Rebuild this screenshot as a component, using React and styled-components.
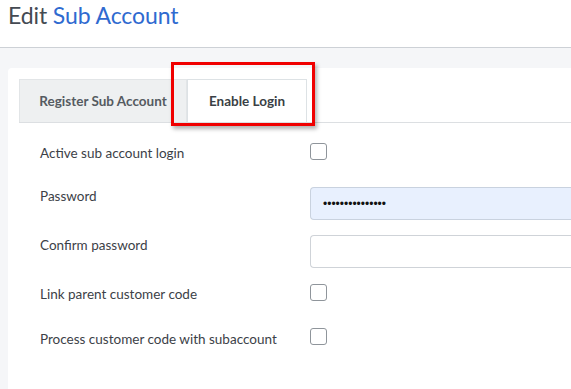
import React from "react";
import styled, { createGlobalStyle } from "styled-components";

const Global = createGlobalStyle`
  html, body { margin: 0; padding: 0; background: #f5f6f8; }
  body { font-family: Lato, "Noto Sans", sans-serif; overflow: hidden; }
`;

const Page = styled.div`
  width: 571px;
  height: 389px;
  overflow: hidden;
  background: #f5f6f8;
`;

const Header = styled.header`
  height: 48px;
  background: #fff;
  border-bottom: 1px solid #cdd1d6;
  box-sizing: border-box;
  padding: 0 0 0 8px;
`;

const Title = styled.h1`
  margin: 0;
  font-weight: 400;
  font-size: 23px;
  line-height: 30px;
  color: #444a52;
  letter-spacing: -0.1px;
`;

const Accent = styled.span`
  color: #2f6ad0;
`;

const Body = styled.main`
  padding: 20px 0 0 8px;
`;

const Card = styled.section`
  background: #fff;
  border-radius: 4px 0 0 0;
  height: 340px;
  padding: 11px 0 0 11px;
  box-sizing: border-box;
`;

const TabBar = styled.div`
  display: flex;
  border-bottom: 1px solid #dcdfe2;
  height: 44px;
  box-sizing: border-box;
  position: relative;
`;

const Tab = styled.div`
  display: flex;
  align-items: center;
  justify-content: center;
  width: ${(p) => p.$w}px;
  height: 43px;
  box-sizing: border-box;
  font-size: 13.5px;
  font-weight: 700;
  color: ${(p) => (p.$active ? "#3a3f45" : "#555b61")};
  background: ${(p) => (p.$active ? "#fff" : "#eef0f1")};
  border: 1px solid ${(p) => (p.$active ? "#dde2e5" : "#e2e5e7")};
  border-bottom: none;
`;

const Highlight = styled.div`
  position: absolute;
  left: 152px;
  top: -17px;
  width: 144px;
  height: 64px;
  box-sizing: border-box;
  border: 3px solid #f00000;
  box-shadow: 2px 3px 4px rgba(0, 0, 0, 0.3);
  pointer-events: none;
`;

const Form = styled.div`
  display: flex;
  flex-direction: column;
  padding: 0 0 0 21px;
`;

const Row = styled.div`
  display: grid;
  grid-template-columns: 270px 1fr;
  align-items: start;
  padding-top: ${(p) => p.$pt}px;
`;

const Label = styled.label`
  font-size: 13.5px;
  line-height: 18px;
  margin-top: ${(p) => p.$mt ?? 1}px;
  color: #3c4147;
`;

const Check = styled.span`
  display: block;
  width: 17px;
  height: 17px;
  box-sizing: border-box;
  border: 1px solid #8f959b;
  border-radius: 3px;
  background: #fff;
`;

const Input = styled.div`
  height: 33px;
  box-sizing: border-box;
  border: 1px solid ${(p) => (p.$filled ? "#c9d2df" : "#cfd3d8")};
  border-right: none;
  border-radius: 4px 0 0 4px;
  background: ${(p) => (p.$filled ? "#e8f0fe" : "#fff")};
  display: flex;
  align-items: center;
  padding-left: 12px;
  font-size: 12px;
  color: #111;
  font-family: "Liberation Sans", Arial, sans-serif;
`;

export default function App() {
  return (
    <Page>
      <Global />
      <Header>
        <Title>
          Edit <Accent>Sub Account</Accent>
        </Title>
      </Header>
      <Body>
        <Card>
          <TabBar>
            <Tab $w={168}>Register Sub Account</Tab>
            <Tab $w={120} $active>
              Enable Login
            </Tab>
            <Highlight />
          </TabBar>
          <Form>
            <Row $pt={20}>
              <Label>Active sub account login</Label>
              <Check />
            </Row>
            <Row $pt={25}>
              <Label $mt={0}>Password</Label>
              <Input $filled>•••••••••••••••</Input>
            </Row>
            <Row $pt={15}>
              <Label>Confirm password</Label>
              <Input />
            </Row>
            <Row $pt={16}>
              <Label>Link parent customer code</Label>
              <Check />
            </Row>
            <Row $pt={25}>
              <Label $mt={2}>Process customer code with subaccount</Label>
              <Check />
            </Row>
          </Form>
        </Card>
      </Body>
    </Page>
  );
}
